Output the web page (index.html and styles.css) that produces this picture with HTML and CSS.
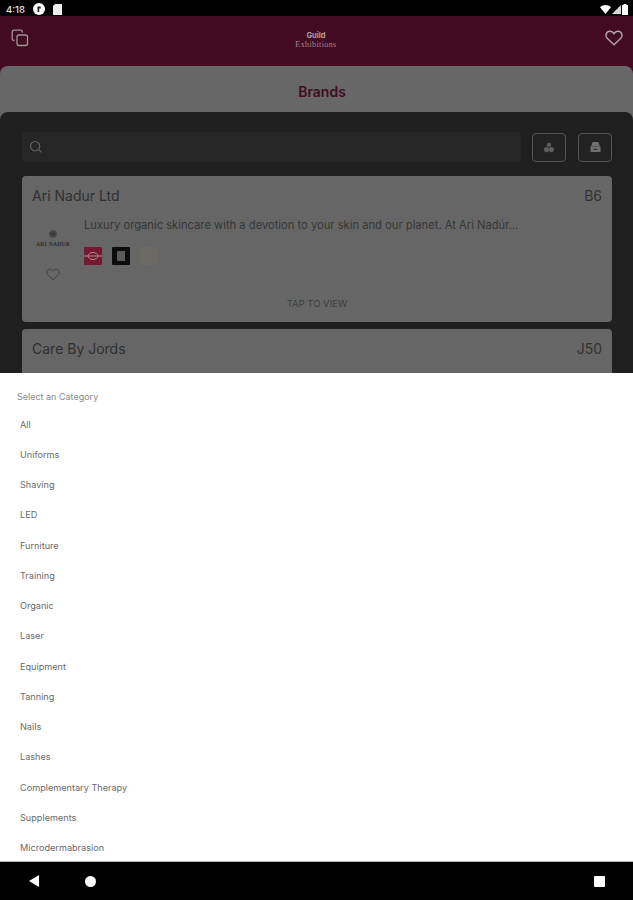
FILE: index.html
```html
<!DOCTYPE html>
<html lang="en">
<head>
    <meta charset="UTF-8">
    <meta name="viewport" content="width=device-width, initial-scale=1.0">
    <title>Brands</title>
    <link rel="stylesheet" href="styles.css">
</head>
<body>
    <div class="status-bar">
        <div class="status-left">
            <span class="clock">4:18</span>
            <span class="status-dot">
                <svg width="12" height="12" viewBox="0 0 12 12"><circle cx="6" cy="6" r="6" fill="#fff"/><path d="M4.500 9V3.500h3.200v2H6.200V9z" fill="#222"/></svg>
            </span>
            <svg width="9" height="11" viewBox="0 0 9 11"><path d="M2 0h7v11H0V2z" fill="#eee"/></svg>
        </div>
        <div class="status-right">
            <svg width="11" height="9" viewBox="0 0 11 9"><path d="M0 2.200C3-.7 8-.7 11 2.200L5.500 9z" fill="#fff"/></svg>
            <svg width="9" height="9" viewBox="0 0 9 9"><path d="M9 0v9H0z" fill="#d8d8d8"/></svg>
            <svg width="6" height="11" viewBox="0 0 6 11"><path d="M1.500 0h3v1H6v10H0V1h1.500z" fill="#fff"/></svg>
        </div>
    </div>

    <header class="app-header">
        <svg class="header-icon" width="18" height="18" viewBox="0 0 18 18" fill="none" stroke="#a3929a" stroke-width="1.3">
            <rect x="6" y="6" width="10.500" height="10.500" rx="2"/>
            <path d="M3.500 11.500H3A1.800 1.800 0 0 1 1.200 9.700V3A1.800 1.800 0 0 1 3 1.200h6.500A1.800 1.800 0 0 1 11.300 3v.5"/>
        </svg>
        <div class="logo">
            <span class="logo-top">Guild</span>
            <span class="logo-bottom">Exhibitions</span>
        </div>
        <svg class="header-icon" width="18" height="16" viewBox="0 0 18 16" fill="none" stroke="#b3a6ac" stroke-width="1.4">
            <path d="M9 14.800 2.200 8.300C-.2 5.800 1.300 1.200 5 1.200c1.800 0 3.200 1 4 2.400.8-1.400 2.200-2.400 4-2.400 3.700 0 5.200 4.600 2.800 7.100z"/>
        </svg>
    </header>

    <main class="page">
        <h1 class="page-title">Brands</h1>
        <div class="panel">
            <div class="toolbar">
                <div class="search">
                    <svg width="14" height="14" viewBox="0 0 16 16" fill="none" stroke="#666" stroke-width="1.300"><circle cx="7" cy="7" r="5.300"/><path d="m11 11 3.200 3.200"/></svg>
                </div>
                <button class="tool-btn">
                    <svg width="10" height="11" viewBox="0 0 11 11" fill="#5f5f5f"><circle cx="5.500" cy="2.600" r="2.400"/><circle cx="2.800" cy="7.800" r="2.800"/><circle cx="8.200" cy="7.800" r="2.800"/></svg>
                </button>
                <button class="tool-btn">
                    <svg width="11" height="10" viewBox="0 0 12 11" fill="#707070"><path d="M3 0h6l2 5H1z"/><path d="M.5 5h11v6H.5z"/><path d="M4 7.500h4v1H4z" fill="#222"/></svg>
                </button>
            </div>

            <article class="card">
                <div class="card-head">
                    <span class="card-name">Ari Nadur Ltd</span>
                    <span class="card-stand">B6</span>
                </div>
                <div class="card-body">
                    <div class="card-side">
                        <div class="brand-logo">
                            <svg width="8" height="8" viewBox="0 0 8 8"><circle cx="4" cy="4" r="3.800" fill="#444"/><circle cx="4" cy="4" r="1.300" fill="#333"/></svg>
                            <span>ARI NADUR</span>
                        </div>
                        <svg class="card-heart" width="14" height="13" viewBox="0 0 18 16" fill="none" stroke="#404040" stroke-width="1.200">
                            <path d="M9 14.800 2.200 8.300C-.2 5.800 1.300 1.200 5 1.200c1.800 0 3.200 1 4 2.400.8-1.400 2.200-2.400 4-2.400 3.700 0 5.200 4.600 2.800 7.100z"/>
                        </svg>
                    </div>
                    <div class="card-main">
                        <p class="card-text">Luxury organic skincare with a devotion to your skin and our planet. At Ari Nadúr...</p>
                        <div class="tags">
                            <svg class="tag" width="18" height="18" viewBox="0 0 18 18">
                                <rect width="18" height="18" fill="#741a33"/>
                                <ellipse cx="9" cy="9" rx="5" ry="3.500" fill="none" stroke="#b68a96"/>
                                <path d="M0 9h18" stroke="#b68a96"/>
                            </svg>
                            <svg class="tag" width="18" height="18" viewBox="0 0 18 18">
                                <rect width="18" height="18" fill="#0c0c0c"/>
                                <rect x="5" y="4" width="8" height="10" fill="#5a5a5a"/>
                            </svg>
                            <svg class="tag" width="18" height="18" viewBox="0 0 18 18">
                                <rect width="18" height="18" fill="#6b6b64"/>
                            </svg>
                        </div>
                    </div>
                </div>
                <div class="card-foot">TAP TO VIEW</div>
            </article>

            <article class="card">
                <div class="card-head">
                    <span class="card-name">Care By Jords</span>
                    <span class="card-stand">J50</span>
                </div>
            </article>
        </div>
    </main>

    <section class="sheet">
        <div class="sheet-title">Select an Category</div>
        <ul class="sheet-list">
            <li>All</li>
            <li>Uniforms</li>
            <li>Shaving</li>
            <li>LED</li>
            <li>Furniture</li>
            <li>Training</li>
            <li>Organic</li>
            <li>Laser</li>
            <li>Equipment</li>
            <li>Tanning</li>
            <li>Nails</li>
            <li>Lashes</li>
            <li>Complementary Therapy</li>
            <li>Supplements</li>
            <li>Microdermabrasion</li>
        </ul>
    </section>

    <nav class="nav-bar">
        <svg width="11" height="12" viewBox="0 0 12 13"><path d="M11 0v13L0 6.500z" fill="#fff"/></svg>
        <svg width="11" height="11" viewBox="0 0 11 11"><circle cx="5.500" cy="5.500" r="5.500" fill="#fff"/></svg>
        <span class="nav-square"></span>
    </nav>
</body>
</html>
```

FILE: styles.css
```css
* {
    box-sizing: border-box;
}

html, body {
    margin: 0;
    height: 900px;
    overflow: hidden;
}

body {
    display: flex;
    flex-direction: column;
    font-family: Inter, "Liberation Sans", sans-serif;
    background-color: #430b22;
}

/* Status bar */
.status-bar {
    flex: 0 0 16px;
    display: flex;
    align-items: center;
    justify-content: space-between;
    padding: 2px 5px 0 6px;
    background-color: #000;
}

.status-left,
.status-right {
    display: flex;
    align-items: center;
}

.status-left {
    gap: 8px;
}

.status-right {
    gap: 1px;
}

.status-dot {
    display: flex;
}

.clock {
    color: #e6e6e6;
    font-size: 9.500px;
    font-weight: 500;
}

/* Header */
.app-header {
    flex: 0 0 50px;
    display: flex;
    align-items: center;
    justify-content: space-between;
    padding: 0 10px 6px 11px;
    background-color: #430b22;
}

.header-icon {
    display: block;
}

.logo {
    display: flex;
    flex-direction: column;
    align-items: center;
    margin: 4px 0 0 -2px;
}

.logo-top {
    color: #b0a2a8;
    font-size: 7.500px;
    font-weight: 700;
    line-height: 9px;
}

.logo-bottom {
    color: #9c8a92;
    font-family: "Liberation Serif", serif;
    font-size: 8px;
    letter-spacing: .4px;
    line-height: 9px;
}

/* Page */
.page {
    flex: 0 0 307px;
    overflow: hidden;
    border-radius: 8px 8px 0 0;
    background-color: #676767;
}

.page-title {
    height: 46px;
    margin: 0;
    padding: 17px 0 0 11px;
    color: #430b22;
    font-size: 14px;
    font-weight: 600;
    line-height: 17px;
    text-align: center;
}

.panel {
    height: 261px;
    padding: 20px 21px 0 22px;
    border-radius: 8px 8px 0 0;
    background-color: #1f1f1f;
}

.toolbar {
    display: flex;
    align-items: center;
    height: 30px;
    margin-bottom: 14px;
}

.search {
    display: flex;
    align-items: center;
    width: 499px;
    height: 30px;
    margin-right: 11px;
    padding-left: 7px;
    border-radius: 4px;
    background-color: #262626;
}

.tool-btn {
    display: flex;
    align-items: center;
    justify-content: center;
    width: 34px;
    height: 29px;
    padding: 0;
    border: 1px solid #555;
    border-radius: 4px;
    background-color: #222;
}

.tool-btn + .tool-btn {
    margin-left: 12px;
}

/* Brand cards */
.card {
    height: 146px;
    margin-bottom: 7px;
    padding: 10px 10px 0;
    border-radius: 4px;
    background-color: #666;
}

.card-head {
    display: flex;
    align-items: center;
    justify-content: space-between;
    color: #2f2f2f;
    font-size: 14px;
    line-height: 20px;
}

.card-stand {
    color: #333;
}

.card-body {
    display: flex;
    height: 72px;
    margin-top: 8px;
}

.card-side {
    flex: 0 0 42px;
    display: flex;
    flex-direction: column;
    align-items: center;
    padding-top: 16px;
}

.brand-logo {
    display: flex;
    flex-direction: column;
    align-items: center;
    gap: 3px;
    color: #2a2a2a;
    font-family: "Liberation Serif", serif;
    font-size: 5.500px;
    font-weight: 700;
    letter-spacing: .3px;
    line-height: 6px;
    white-space: nowrap;
}

.card-heart {
    margin-top: 21px;
}

.card-main {
    flex: 1;
    min-width: 0;
    padding-left: 10px;
}

.card-text {
    margin: 4px 0 0;
    color: #363636;
    font-size: 11.200px;
    line-height: 14px;
    white-space: nowrap;
}

.tags {
    display: flex;
    gap: 10px;
    margin-top: 15px;
}

.tag {
    display: block;
    border-radius: 1px;
}

.card-foot {
    margin-top: 12px;
    color: #3d3d3d;
    font-size: 9.500px;
    line-height: 12px;
    text-align: center;
}

/* Category sheet */
.sheet {
    flex: 0 0 488px;
    overflow: hidden;
    padding: 18px 0 0;
    background-color: #fff;
}

.sheet-title {
    padding-left: 17px;
    color: #8a8a8a;
    font-size: 9px;
    line-height: 12px;
}

.sheet-list {
    margin: 6.500px 0 0;
    padding: 0 0 0 20px;
    list-style: none;
    color: #6a6a6a;
    font-size: 9.150px;
}

.sheet-list li {
    height: 30.250px;
    line-height: 30.250px;
}

/* Android nav bar */
.nav-bar {
    flex: 0 0 39px;
    display: flex;
    align-items: center;
    padding: 0 28px 0 29px;
    border-top: 1px solid #b5b5b5;
    background-color: #000;
}

.nav-bar svg:nth-child(2) {
    margin-left: 45px;
}

.nav-square {
    width: 11px;
    height: 11px;
    margin-left: auto;
    border-radius: 1px;
    background-color: #fff;
}
```
